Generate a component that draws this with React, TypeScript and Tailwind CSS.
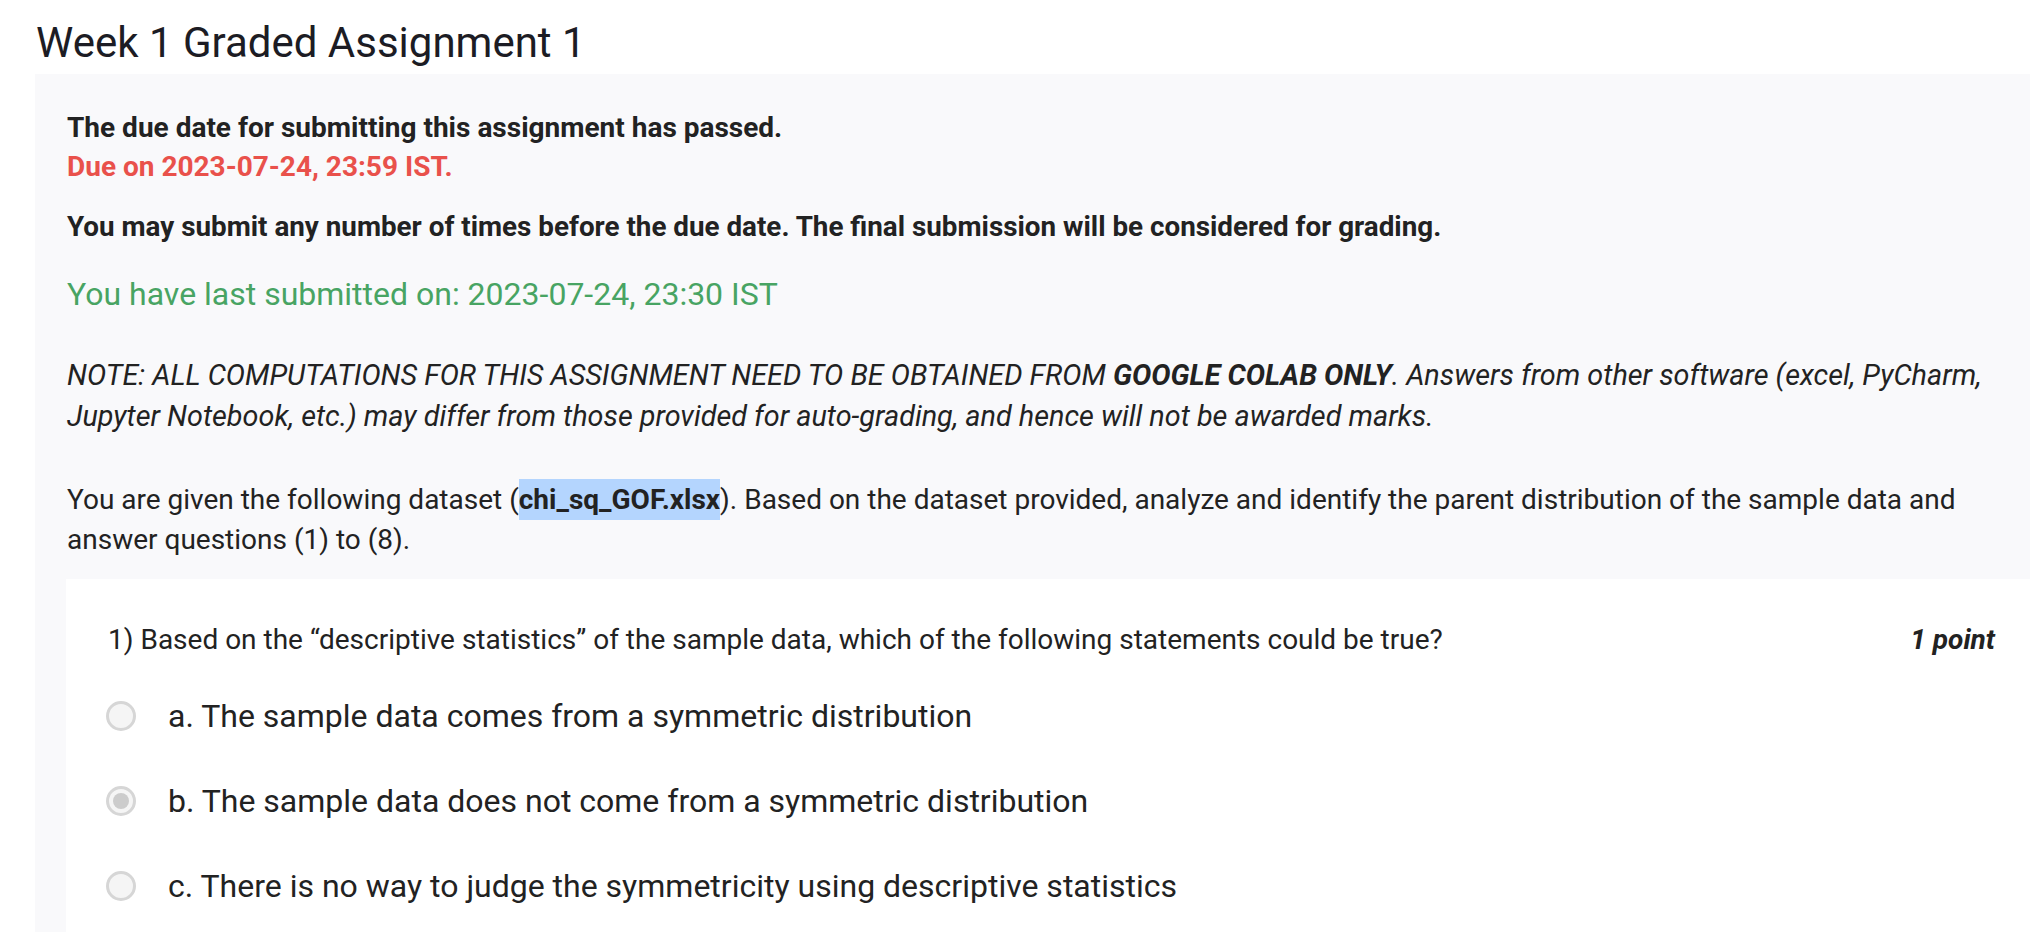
import React from "react";

function Radio({ checked }: { checked?: boolean }) {
  return (
    <span className="flex h-[30px] w-[30px] shrink-0 items-center justify-center rounded-full border-[3px] border-[#d6d6d6] bg-[#f5f5f5]">
      {checked ? <span className="h-[16px] w-[16px] rounded-full bg-[#cccccc]" /> : null}
    </span>
  );
}

function Option({ label, checked }: { label: string; checked?: boolean }) {
  return (
    <div className="flex items-center gap-[32px] leading-[40px]">
      <Radio checked={checked} />
      <span className="text-[32px] text-[#222]">{label}</span>
    </div>
  );
}

export default function App() {
  return (
    <div className="h-[932px] w-[2030px] overflow-hidden bg-white font-['Roboto',sans-serif] text-[#222]">
      <div className="w-[2090px]">
        <h1 className="pl-[36px] pt-[18px] text-[42px] leading-[50px] text-[#1c1c24]">Week 1 Graded Assignment 1</h1>
        <div className="ml-[35px] mt-[6px] w-[2017px] bg-[#f9f9fb] pl-[32px] pr-[32px] pt-[34px] pb-[19px]">
          <p className="text-[28px] font-bold leading-[39px]">The due date for submitting this assignment has passed.</p>
          <p className="text-[28px] font-bold leading-[39px] text-[#e9514b]">Due on 2023-07-24, 23:59 IST.</p>
          <p className="mt-[21px] text-[27.8px] font-bold leading-[39px]">
            You may submit any number of times before the due date. The final submission will be considered for grading.
          </p>
          <p className="mt-[26px] text-[32px] leading-[44px] text-[#48a463]">You have last submitted on: 2023-07-24, 23:30 IST</p>
          <p className="mt-[39px] text-[28.8px] italic leading-[41px]">
            NOTE: ALL COMPUTATIONS FOR THIS ASSIGNMENT NEED TO BE OBTAINED FROM <b>GOOGLE COLAB ONLY</b>. Answers from other software (excel, PyCharm, Jupyter Notebook, etc.) may differ from those provided for auto-grading, and hence will not be awarded marks.
          </p>
          <p className="mt-[43px] text-[28px] leading-[40px]">
            You are given the following dataset (<b className="bg-[#b4d5fe] py-[4px]">chi_sq_GOF.xlsx</b>). Based on the dataset provided, analyze and identify the parent distribution of the sample data and answer questions (1) to (8).
          </p>
          <div className="-ml-[1px] -mr-[24px] mt-[19px] bg-white pl-[42px] pr-[49px] pt-[43px] pb-[40px]">
            <div className="flex items-center justify-between leading-[36px]">
              <span className="text-[28px]">1) Based on the “descriptive statistics” of the sample data, which of the following statements could be true?</span>
              <span className="text-[28px] font-bold italic">1 point</span>
            </div>
            <div className="-ml-[2px] mt-[38px] flex flex-col gap-[45px]">
              <Option label="a. The sample data comes from a symmetric distribution" />
              <Option label="b. The sample data does not come from a symmetric distribution" checked />
              <Option label="c. There is no way to judge the symmetricity using descriptive statistics" />
            </div>
          </div>
        </div>
      </div>
    </div>
  );
}
